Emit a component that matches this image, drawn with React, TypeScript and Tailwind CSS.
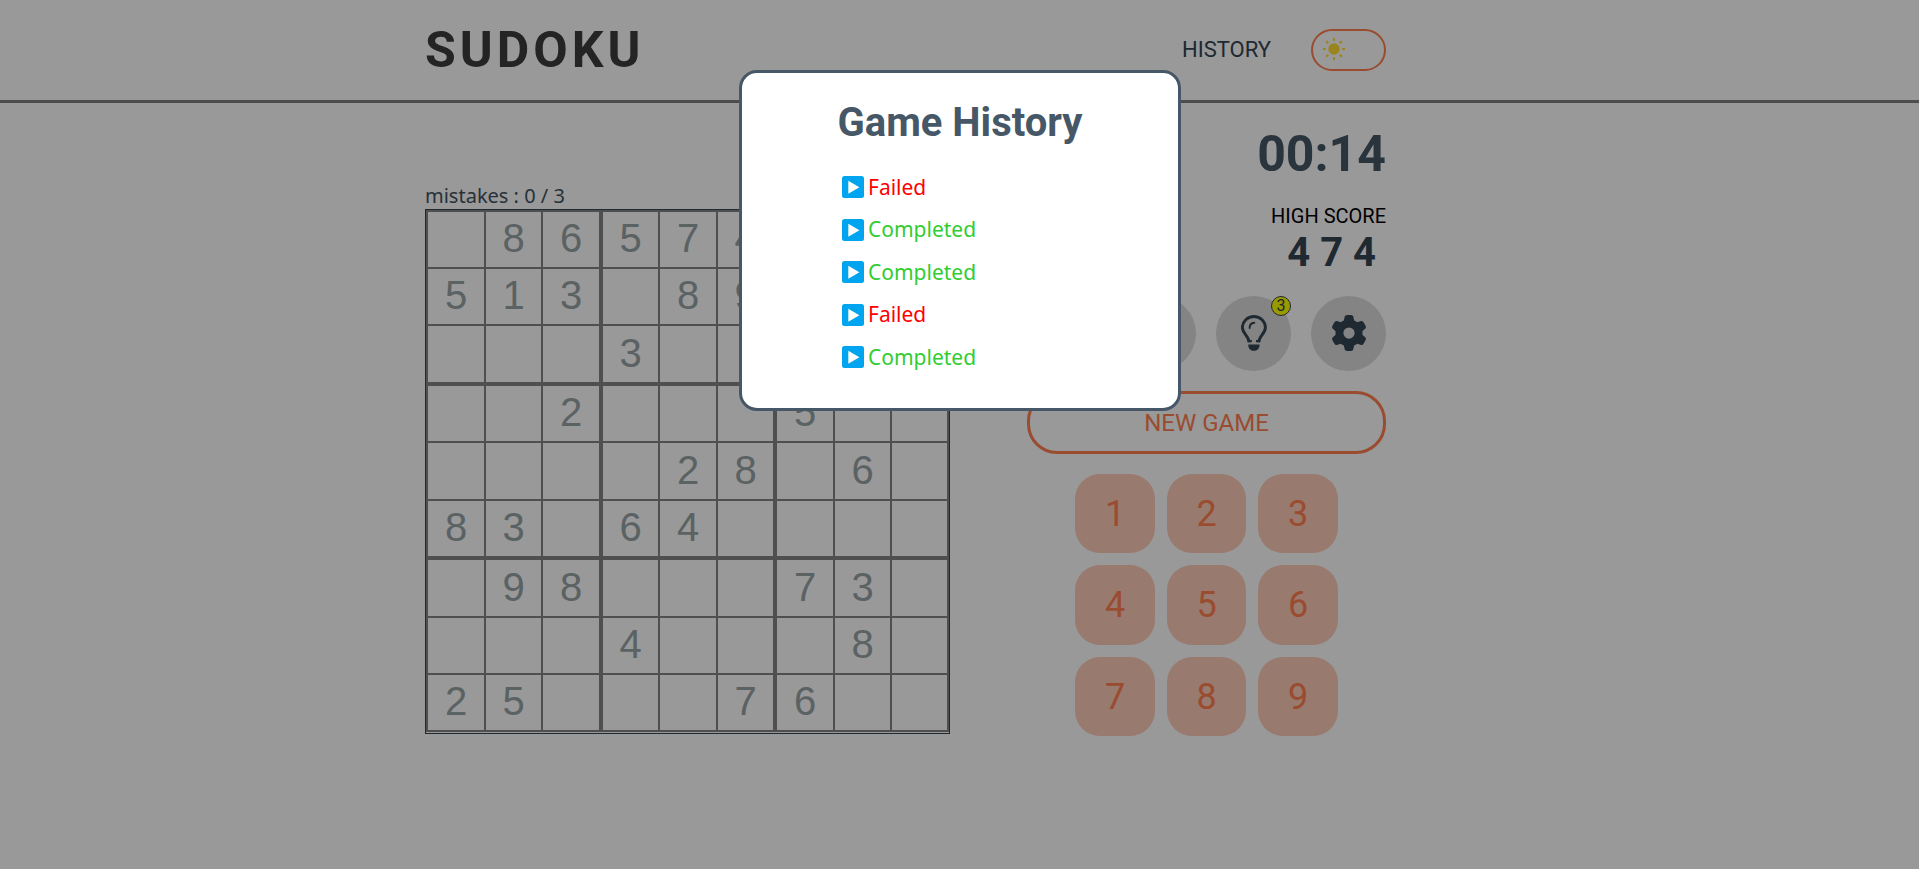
import { FaGear } from "react-icons/fa6";

const puzzle = [
  " 86574   ",
  "513 89   ",
  "   3     ",
  "  2   5  ",
  "    28 6 ",
  "83 64    ",
  " 98   73 ",
  "   4   8 ",
  "25   76  ",
];

const games = ["Failed", "Completed", "Completed", "Failed", "Completed"];

function Header() {
  return (
    <header className="h-[103px] border-b-[3px] border-[#808080]">
      <div className="ml-[425px] flex h-[100px] w-[961px] items-center justify-between">
        <h1 className="text-[50px] font-bold leading-none tracking-[4px] text-[#3c3c3c]">SUDOKU</h1>
        <div className="flex items-center">
          <span className="mr-[40px] pb-[2px] text-[22px] text-[#344552]">HISTORY</span>
          <div className="flex h-[42px] w-[75px] items-center rounded-full border-2 border-[#ff7f50] pl-[10px]">
            <svg viewBox="0 0 22 22" className="-mt-[2px] size-[22px]">
              <circle cx="11" cy="11" r="5.7" fill="#ffdd33" />
              <g stroke="#ffdd33" strokeWidth="2.1">
                <path d="M11 0v2.8M11 19.2V22M0 11h2.8M19.2 11H22M3.2 3.2l2.1 2.1M16.7 16.7l2.1 2.1M3.2 18.8l2.1-2.1M16.7 5.3l2.1-2.1" />
              </g>
            </svg>
          </div>
        </div>
      </div>
    </header>
  );
}

function Board() {
  return (
    <div className="w-[525px] border border-[#344552] pb-px">
      <div className="grid grid-cols-[58px_57px_60px_57px_58px_59px_58px_57px_57px] grid-rows-[57px_57px_60px_57px_58px_59px_58px_57px_57px] border-l-2 border-t-2 border-[#848484] font-['Liberation_Sans',sans-serif]">
        {puzzle.flatMap((row, r) =>
          row.split("").map((value, c) => (
            <div
              key={`${r}-${c}`}
              className={`flex items-center justify-center border-[#848484] pb-[3px] text-[40px] leading-none text-[#98a3a5] ${
                c === 2 || c === 5 ? "border-r-4" : "border-r-2"
              } ${r === 2 || r === 5 ? "border-b-4" : "border-b-2"}`}
            >
              {value.trim()}
            </div>
          ))
        )}
      </div>
    </div>
  );
}

function Controls() {
  return (
    <div className="flex w-[359px] flex-col">
      <div className="mt-[21px] text-right text-[50px] font-bold leading-[60px] text-[#465867]">00:14</div>
      <div className="mt-[20px] text-right text-[20px] leading-[24px] text-black">HIGH SCORE</div>
      <div className="mr-[10px] mt-px text-right text-[40px] font-bold leading-[48px] text-[#344552]">4 7 4</div>
      <div className="mt-[19px] flex h-[75px] justify-end gap-[20px]">
        <div className="size-[75px] rounded-full bg-[#dcdcdc]" />
        <div className="relative flex size-[75px] items-center justify-center rounded-full bg-[#dcdcdc] pb-[2px]">
          <svg viewBox="0 0 26 36" className="h-[36px] w-[26px] text-[#344552]">
            <path
              d="M8 27.200c0-6.500-6.600-8.200-6.600-14.700a11.500 11 0 0 1 23 0c0 6.500-6.600 8.200-6.600 14.700"
              fill="none"
              stroke="currentColor"
              strokeWidth="2.9"
            />
            <path d="M6.800 26.200h4M15 26.200h4" stroke="currentColor" strokeWidth="2.200" />
            <path d="M8.600 13c0-2.900 1.700-4.900 4.700-5.200" fill="none" stroke="currentColor" strokeWidth="2" strokeLinecap="round" />
            <path d="M7.200 29.400h11.400c0 4-2.200 6.300-5.700 6.300s-5.700-2.300-5.700-6.300z" fill="currentColor" />
          </svg>
          <span className="absolute right-0 top-0 flex size-5 items-center justify-center rounded-full border border-[#344552] bg-[#ffff00] text-[16px] leading-none text-[#344552]">
            3
          </span>
        </div>
        <div className="flex size-[75px] items-center justify-center rounded-full bg-[#dcdcdc] pb-[2px] text-[#344552]">
          <FaGear size={36} />
        </div>
      </div>
      <button className="mt-[20px] h-[63px] rounded-[30px] border-[3px] border-[#ff7f50] text-[24px] text-[#ff7f50]">NEW GAME</button>
      <div className="ml-[48px] mt-5 grid w-[263px] grid-cols-[80px_79px_80px] grid-rows-[79px_80px_79px] gap-3">
        {[1, 2, 3, 4, 5, 6, 7, 8, 9].map((n) => (
          <button key={n} className="rounded-[25px] bg-[#ffcbb9] text-[36px] leading-none text-[#ff7f50]">
            {n}
          </button>
        ))}
      </div>
    </div>
  );
}

function HistoryModal() {
  return (
    <div className="fixed inset-0 bg-black/40 pt-[70px]">
      <section className="ml-[739px] flex h-[341px] w-[442px] flex-col rounded-[18px] border-[3px] border-[#465867] bg-white pl-[95.5px] pt-[26px]">
        <h2 className="text-[40px] font-bold leading-[48px] text-[#465867]">Game History</h2>
        <ul className="mt-[19px]">
          {games.map((result, i) => (
            <li key={i} className="flex h-[42.5px] items-center font-['Noto_Sans',sans-serif] text-[21px]">
              <svg viewBox="0 0 22 22" className="ml-[4.5px] mr-[4px] size-[22px]">
                <rect width="22" height="22" rx="2.5" fill="#00a4ef" />
                <path d="M6.300 4.700v13.100L17.400 11.250z" fill="#fff" />
              </svg>
              <span className={result === "Failed" ? "text-[#ff0000]" : "text-[#32cd32]"}>{result}</span>
            </li>
          ))}
        </ul>
      </section>
    </div>
  );
}

export default function App() {
  return (
    <div className="h-[869px] overflow-hidden bg-white font-['Roboto',sans-serif]">
      <Header />
      <main className="ml-[425px] flex w-[961px] justify-between">
        <div className="pt-[80px]">
          <p className="h-[26px] font-['Noto_Sans',sans-serif] text-[20px] leading-[26px] text-[#43525f]">mistakes : 0 / 3</p>
          <Board />
        </div>
        <Controls />
      </main>
      <HistoryModal />
    </div>
  );
}
